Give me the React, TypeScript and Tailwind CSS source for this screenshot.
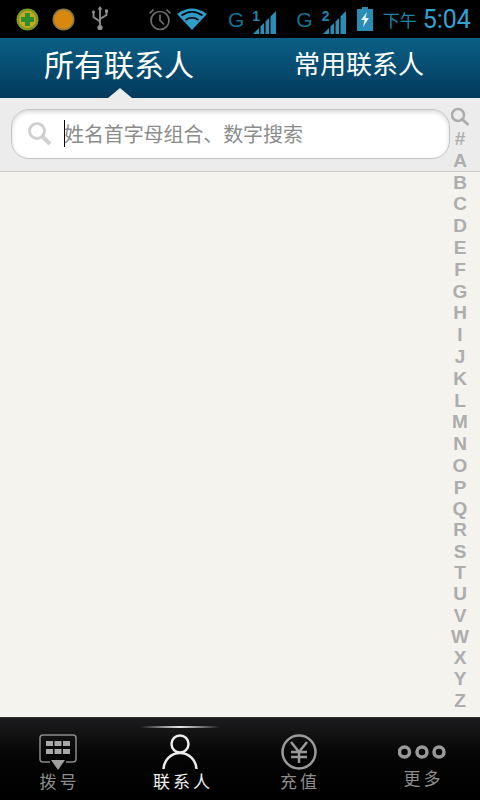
import React from 'react';

const CJK = '"Noto Sans CJK SC", "Liberation Sans", sans-serif';
const letters = '#ABCDEFGHIJKLMNOPQRSTUVWXYZ'.split('');

const Signal = ({ n }: { n: string }) => (
  <div className="relative h-[30px] w-[25px]">
    <span className="absolute left-0 top-[6px] text-[14px] leading-[13px] font-bold text-[#1f86ad]" style={{ fontFamily: '"Liberation Sans"' }}>{n}</span>
    <svg width="25" height="30" viewBox="0 0 25 30" className="absolute left-0 top-0">
      <path d="M1 30 L7 24 V30 Z" fill="#2a8db5" />
      <path d="M8.500 30 V22.500 L12 19 V30 Z" fill="#2a8db5" />
      <path d="M13.500 30 V17.500 L17 14 V30 Z" fill="#2a8db5" />
      <path d="M18.500 30 V12.500 L24 7 V30 Z" fill="#2a8db5" />
    </svg>
  </div>
);

const StatusBar = () => (
  <div className="flex h-[38px] items-center bg-black pl-[16px]">
    <svg width="23" height="23" viewBox="0 0 23 23">
      <circle cx="11.500" cy="11.500" r="11" fill="#7f9a1c" />
      <circle cx="11.500" cy="11.500" r="8.500" fill="#c9a825" />
      <path d="M9 5h5v4h4v5h-4v4H9v-4H5V9h4z" fill="#2f8f2c" />
    </svg>
    <svg width="23" height="23" viewBox="0 0 23 23" className="ml-[13px]">
      <circle cx="11.500" cy="11.500" r="11" fill="#8a7a45" />
      <circle cx="11.500" cy="11.500" r="9.500" fill="#d8870f" />
    </svg>
    <svg width="18" height="26" viewBox="0 0 18 26" className="ml-[16px]" fill="none" stroke="#8f8f8f" strokeWidth="1.800">
      <path d="M9 2v18M2.500 7v4l6.500 4.500M15.500 6v3l-6.500 4" />
      <circle cx="9" cy="21.500" r="2.600" fill="#8f8f8f" stroke="none" />
      <path d="M9 0l2.500 3.500h-5z" fill="#8f8f8f" stroke="none" />
      <circle cx="2.500" cy="6" r="1.600" fill="#8f8f8f" stroke="none" />
      <rect x="14" y="3.500" width="3" height="3" fill="#8f8f8f" stroke="none" />
    </svg>
    <svg width="24" height="24" viewBox="0 0 24 24" className="ml-[39px]" fill="none" stroke="#6f6f6f" strokeWidth="1.700">
      <circle cx="12" cy="13.500" r="9" />
      <path d="M12 7.500v6l4 4M1.500 6.500l4-4M22.500 6.500l-4-4" />
    </svg>
    <svg width="30" height="24" viewBox="0 0 30 24" className="ml-[5px]">
      <path d="M15 23 L0 7 Q15 -4 30 7 Z" fill="#2f9bc6" />
      <path d="M4.500 8.500Q15 1 25.500 8.500M8.500 13Q15 8.500 21.500 13" fill="none" stroke="#000" strokeWidth="1.600" />
    </svg>
    <span className="ml-[21px] text-[21px] leading-none text-[#0f7396]" style={{ fontFamily: '"Liberation Sans"' }}>G</span>
    <div className="ml-[8px]"><Signal n="1" /></div>
    <span className="ml-[19px] text-[21px] leading-none text-[#0f7396]" style={{ fontFamily: '"Liberation Sans"' }}>G</span>
    <div className="ml-[9px]"><Signal n="2" /></div>
    <svg width="16" height="24" viewBox="0 0 16 24" className="ml-[10px]">
      <rect x="5" y="0" width="6" height="3" fill="#2a8db5" />
      <rect x="0" y="2" width="16" height="22" fill="#2a8db5" />
      <path d="M10 5 L4 13h3.500L6 20l6-9H8.500z" fill="#e8f4f8" />
    </svg>
    <span className="ml-[10px] text-[17px] leading-none text-[#1a86ad]" style={{ fontFamily: CJK }}>下午</span>
    <span className="ml-[6px] text-[25px] leading-none text-[#2fa3d4]" style={{ fontFamily: '"Roboto", sans-serif' }}>5:04</span>
  </div>
);

const Header = () => (
  <div className="relative flex h-[60px] bg-[linear-gradient(#0b5f85,#023a5c)] text-white" style={{ fontFamily: CJK }}>
    <div className="flex w-[238px] items-center justify-center pb-[10px] text-[30px] leading-none">所有联系人</div>
    <div className="flex flex-1 items-center justify-center pb-[10px] text-[26px] leading-none">常用联系人</div>
    <div className="absolute bottom-0 left-[108px] h-0 w-0 border-x-[12px] border-b-[10px] border-x-transparent border-b-[#ececec]" />
  </div>
);

const SearchBar = () => (
  <div className="flex h-[74px] items-center border-b border-[#c9c9c9] bg-[#ececec] pb-[2px] pl-[11px]">
    <div className="flex h-[50px] w-[439px] items-center rounded-[18px] border border-[#c4c4c4] bg-white pl-[15px] shadow-[inset_0_2px_4px_#d8d8d8]">
      <svg width="25" height="25" viewBox="0 0 25 25" fill="none" stroke="#d0d0d0">
        <circle cx="10" cy="10" r="7.500" strokeWidth="3" />
        <path d="M15.500 15.500L23 23" strokeWidth="4" />
      </svg>
      <div className="ml-[12px] h-[27px] w-px bg-black" />
      <span className="-ml-px text-[20px] leading-none tracking-[-0.1px] text-[#8c8c8c]" style={{ fontFamily: CJK }}>姓名首字母组合、数字搜索</span>
    </div>
  </div>
);

const SideIndex = () => (
  <div className="absolute right-0 top-[9px] flex w-[40px] flex-col items-center font-bold text-[#adadad]" style={{ fontFamily: '"Liberation Sans", sans-serif' }}>
    <svg width="20" height="20" viewBox="0 0 20 20" fill="none" stroke="#adadad" className="mb-[1px]">
      <circle cx="8" cy="8" r="6" strokeWidth="2.500" />
      <path d="M12.500 12.500L18.500 18" strokeWidth="3" />
    </svg>
    {letters.map((l, i) => (
      <div key={l} className={`text-[19px] leading-[21.800px] ${i < 16 ? 'h-[21.800px]' : 'h-[21.300px]'}`}>{l}</div>
    ))}
  </div>
);

const tabs = [
  {
    label: '拨号',
    active: false,
    cls: 'mt-[1px] -ml-[1px]',
    icon: (
      <svg width="38" height="36" viewBox="0 0 38 36" fill="none" className="-ml-[5px]">
        <path d="M11 28H4Q1 28 1 25V4Q1 1 4 1H34Q37 1 37 4V25Q37 28 34 28H27" stroke="#8a8a8a" strokeWidth="1.500" />
        <path d="M12 26H26L19 36Z" fill="#a0a0a0" />
        <g fill="#a8a8a8">
          <rect x="7" y="7" width="7" height="5" /><rect x="15.500" y="7" width="7" height="5" /><rect x="24" y="7" width="7" height="5" />
          <rect x="7" y="15" width="7" height="5" /><rect x="15.500" y="15" width="7" height="5" /><rect x="24" y="15" width="7" height="5" />
        </g>
      </svg>
    ),
  },
  {
    label: '联系人',
    active: true,
    cls: 'mt-[1px] ml-[6px]',
    icon: (
      <svg width="36" height="36" viewBox="0 0 36 36" fill="none" stroke="#ececec" strokeWidth="2.500">
        <circle cx="18" cy="10" r="8.500" />
        <path d="M1.500 35C2 26 9 19 18 19s16 7 16.500 16" />
      </svg>
    ),
  },
  {
    label: '充值',
    active: false,
    cls: 'mt-[1px]',
    icon: (
      <svg width="36" height="36" viewBox="0 0 36 36" fill="none" stroke="#9a9a9a" className="-ml-[2px] -mt-[1px]">
        <circle cx="18" cy="18" r="16.500" strokeWidth="2.500" />
        <path d="M10 8l8 10 8-10M18 18v11M10 18h16M10 23h16" strokeWidth="2.500" />
      </svg>
    ),
  },
  {
    label: '更多',
    active: false,
    cls: '-mt-[2px] ml-[7px]',
    icon: (
      <svg width="48" height="36" viewBox="0 0 48 36" fill="none" stroke="#9a9a9a" strokeWidth="3.500" className="ml-[4px]">
        <circle cx="6.500" cy="18" r="5" /><circle cx="24" cy="18" r="5" /><circle cx="41" cy="18" r="5" />
      </svg>
    ),
  },
];

const TabBar = () => (
  <div className="flex h-[83px] border-t border-[#333] bg-[linear-gradient(#1c1c1e,#050505_45%,#000)]">
    {tabs.map((t) => (
      <div key={t.label} className="relative flex w-[120px] flex-col items-center pt-[16px]">
        {t.active && (
          <div className="absolute left-[20px] top-[8px] h-[2px] w-[80px] bg-[linear-gradient(90deg,transparent,#e8e8e8,transparent)]" />
        )}
        <div className="flex h-[36px] items-center justify-center">{t.icon}</div>
        <span
          className={`text-[17px] leading-[20px] tracking-[3px] ${t.cls} ${t.active ? 'text-[#f0f0f0]' : 'text-[#8e8e8e]'}`}
          style={{ fontFamily: CJK }}
        >
          {t.label}
        </span>
      </div>
    ))}
  </div>
);

export default function App() {
  return (
    <div className="flex h-[800px] w-[480px] flex-col overflow-hidden bg-[#f4f3ee]">
      <StatusBar />
      <Header />
      <div className="relative flex min-h-0 flex-1 flex-col">
        <SearchBar />
        <div className="flex-1" />
        <SideIndex />
      </div>
      <TabBar />
    </div>
  );
}
